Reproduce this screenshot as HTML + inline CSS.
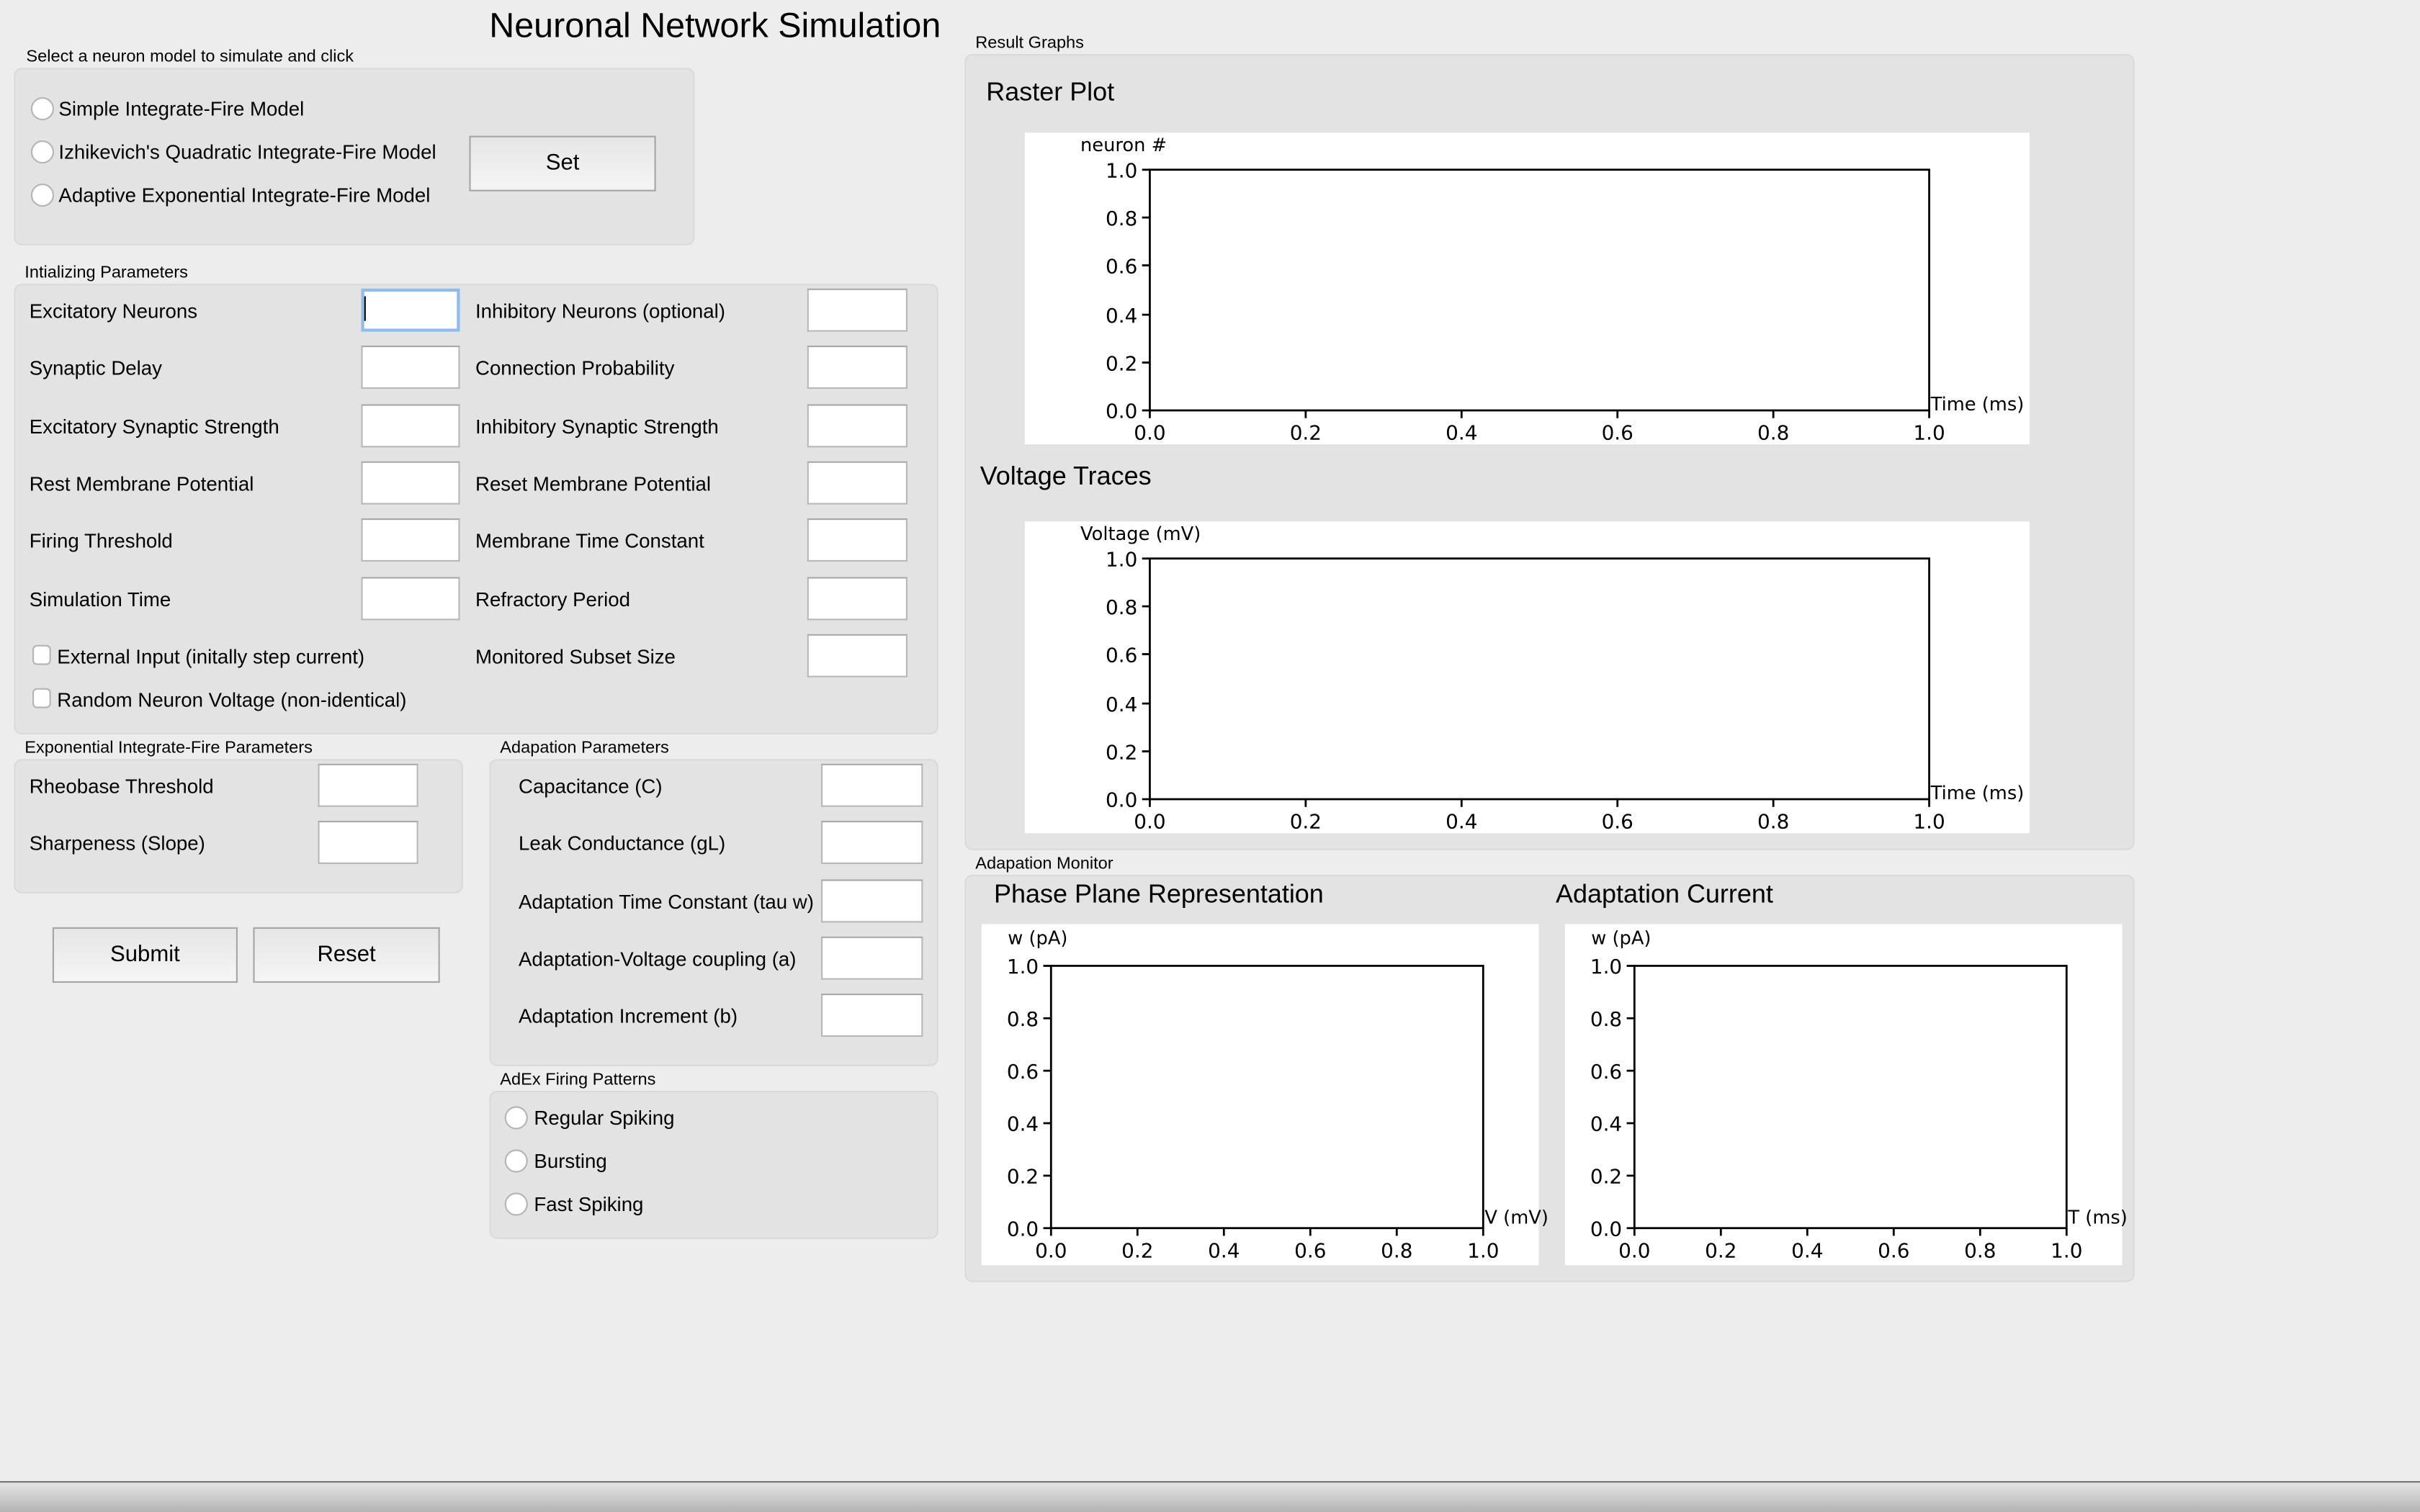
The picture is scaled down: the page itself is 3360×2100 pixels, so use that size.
<!DOCTYPE html>
<html><head><meta charset="utf-8">
<style>
html,body{margin:0;padding:0;background:#ededed;overflow:hidden}
#root{position:absolute;left:0;top:0;width:1568px;height:980px;transform:scale(2.142857);transform-origin:0 0;font-family:"Liberation Sans",sans-serif;color:#000;font-size:12.5px}
.a{position:absolute;white-space:nowrap}
.p{position:absolute;background:#e3e3e3;border:1px solid #dadada;border-radius:5px;box-sizing:border-box}
.cap{position:absolute;font-size:11px;white-space:nowrap}
.in{position:absolute;width:64px;height:28px;background:#fff;border:1px solid #b8b8b8;border-top-color:#a8a8a8;box-sizing:border-box}
.rb{position:absolute;width:15px;height:15px;border-radius:50%;background:#fff;border:1px solid #b5b5b5;box-sizing:border-box}
.cb{position:absolute;width:12px;height:13px;border-radius:3px;background:#fff;border:1px solid #b5b5b5;box-sizing:border-box}
.btn{position:absolute;background:linear-gradient(#e6e6e6,#f5f5f5);border:1px solid #a6a6a6;box-sizing:border-box;text-align:center;font-size:14.5px}
.lbl{position:absolute;font-size:12.9px;white-space:nowrap;line-height:14px}
.h{position:absolute;font-size:16.8px;white-space:nowrap}
</style></head><body><div id="root">
<div class="a" style="left:317px;top:4px;font-size:22.6px">Neuronal Network Simulation</div>

<div class="cap" style="left:17px;top:31px">Select a neuron model to simulate and click</div>
<div class="p" style="left:9px;top:44px;width:441px;height:115px"></div>
<div class="rb" style="left:20px;top:63px"></div><div class="lbl" style="left:38px;top:64px">Simple Integrate-Fire Model</div>
<div class="rb" style="left:20px;top:91px"></div><div class="lbl" style="left:38px;top:92px">Izhikevich's Quadratic Integrate-Fire Model</div>
<div class="rb" style="left:20px;top:119px"></div><div class="lbl" style="left:38px;top:120px">Adaptive Exponential Integrate-Fire Model</div>
<div class="btn" style="left:304px;top:88px;width:121px;height:36px;line-height:34px">Set</div>

<div class="cap" style="left:16px;top:171px">Intializing Parameters</div>
<div class="p" style="left:9px;top:184px;width:599px;height:292px"></div>
<div class="lbl" style="left:19px;top:195px">Excitatory Neurons</div><div class="in" style="left:234px;top:187px;border:2px solid #8fbbee"></div><div class="a" style="left:236px;top:192px;width:1px;height:16px;background:#000"></div>
<div class="lbl" style="left:19px;top:232px">Synaptic Delay</div><div class="in" style="left:234px;top:224px"></div>
<div class="lbl" style="left:19px;top:270px">Excitatory Synaptic Strength</div><div class="in" style="left:234px;top:262px"></div>
<div class="lbl" style="left:19px;top:307px">Rest Membrane Potential</div><div class="in" style="left:234px;top:299px"></div>
<div class="lbl" style="left:19px;top:344px">Firing Threshold</div><div class="in" style="left:234px;top:336px"></div>
<div class="lbl" style="left:19px;top:382px">Simulation Time</div><div class="in" style="left:234px;top:374px"></div>
<div class="cb" style="left:21px;top:418px"></div><div class="lbl" style="left:37px;top:419px">External Input (initally step current)</div>
<div class="cb" style="left:21px;top:446px"></div><div class="lbl" style="left:37px;top:447px">Random Neuron Voltage (non-identical)</div>
<div class="lbl" style="left:308px;top:195px">Inhibitory Neurons (optional)</div><div class="in" style="left:523px;top:187px;width:65px"></div>
<div class="lbl" style="left:308px;top:232px">Connection Probability</div><div class="in" style="left:523px;top:224px;width:65px"></div>
<div class="lbl" style="left:308px;top:270px">Inhibitory Synaptic Strength</div><div class="in" style="left:523px;top:262px;width:65px"></div>
<div class="lbl" style="left:308px;top:307px">Reset Membrane Potential</div><div class="in" style="left:523px;top:299px;width:65px"></div>
<div class="lbl" style="left:308px;top:344px">Membrane Time Constant</div><div class="in" style="left:523px;top:336px;width:65px"></div>
<div class="lbl" style="left:308px;top:382px">Refractory Period</div><div class="in" style="left:523px;top:374px;width:65px"></div>
<div class="lbl" style="left:308px;top:419px">Monitored Subset Size</div><div class="in" style="left:523px;top:411px;width:65px"></div>

<div class="cap" style="left:16px;top:479px">Exponential Integrate-Fire Parameters</div>
<div class="p" style="left:9px;top:492px;width:291px;height:87px"></div>
<div class="lbl" style="left:19px;top:503px">Rheobase Threshold</div><div class="in" style="left:206px;top:495px;width:65px"></div>
<div class="lbl" style="left:19px;top:540px">Sharpeness (Slope)</div><div class="in" style="left:206px;top:532px;width:65px"></div>

<div class="btn" style="left:34px;top:601px;width:120px;height:36px;line-height:34px">Submit</div>
<div class="btn" style="left:164px;top:601px;width:121px;height:36px;line-height:34px">Reset</div>

<div class="cap" style="left:324px;top:479px">Adapation Parameters</div>
<div class="p" style="left:317px;top:492px;width:291px;height:199px"></div>
<div class="lbl" style="left:336px;top:503px">Capacitance (C)</div><div class="in" style="left:532px;top:495px;width:66px"></div>
<div class="lbl" style="left:336px;top:540px">Leak Conductance (gL)</div><div class="in" style="left:532px;top:532px;width:66px"></div>
<div class="lbl" style="left:336px;top:578px">Adaptation Time Constant (tau w)</div><div class="in" style="left:532px;top:570px;width:66px"></div>
<div class="lbl" style="left:336px;top:615px">Adaptation-Voltage coupling (a)</div><div class="in" style="left:532px;top:607px;width:66px"></div>
<div class="lbl" style="left:336px;top:652px">Adaptation Increment (b)</div><div class="in" style="left:532px;top:644px;width:66px"></div>

<div class="cap" style="left:324px;top:694px">AdEx Firing Patterns</div>
<div class="p" style="left:317px;top:707px;width:291px;height:96px"></div>
<div class="rb" style="left:327px;top:717px"></div><div class="lbl" style="left:346px;top:718px">Regular Spiking</div>
<div class="rb" style="left:327px;top:745px"></div><div class="lbl" style="left:346px;top:746px">Bursting</div>
<div class="rb" style="left:327px;top:773px"></div><div class="lbl" style="left:346px;top:774px">Fast Spiking</div>

<div class="cap" style="left:632px;top:22px">Result Graphs</div>
<div class="p" style="left:625px;top:35px;width:758px;height:516px"></div>
<div class="h" style="left:639px;top:50px">Raster Plot</div>
<div class="h" style="left:635px;top:299px">Voltage Traces</div>
<div class="a" style="left:664px;top:86px;width:651px;height:202px;background:#fff"></div>
<div class="a" style="left:664px;top:338px;width:651px;height:202px;background:#fff"></div>

<div class="cap" style="left:632px;top:554px">Adapation Monitor</div>
<div class="p" style="left:625px;top:567px;width:758px;height:264px"></div>
<div class="h" style="left:644px;top:570px">Phase Plane Representation</div>
<div class="h" style="left:1008px;top:570px">Adaptation Current</div>
<div class="a" style="left:636px;top:599px;width:361px;height:221px;background:#fff"></div>
<div class="a" style="left:1014px;top:599px;width:361px;height:221px;background:#fff"></div>

<svg class="a" style="left:0;top:0" width="1568" height="980" viewBox="0 0 1568 980" font-family="DejaVu Sans, Liberation Sans, sans-serif" font-size="13">
<g fill="none" stroke="#000" stroke-width="1.3">
<rect x="745" y="110" width="505" height="156"/>
<path d="M745 266v5M846 266v5M947 266v5M1048 266v5M1149 266v5M1250 266v5M745 266h-5M745 235h-5M745 204h-5M745 172h-5M745 141h-5M745 110h-5"/>
<rect x="745" y="362" width="505" height="156"/>
<path d="M745 518v5M846 518v5M947 518v5M1048 518v5M1149 518v5M1250 518v5M745 518h-5M745 487h-5M745 456h-5M745 424h-5M745 393h-5M745 362h-5"/>
<rect x="681" y="626" width="280" height="170"/>
<path d="M681 796v5M737 796v5M793 796v5M849 796v5M905 796v5M961 796v5M681 796h-5M681 762h-5M681 728h-5M681 694h-5M681 660h-5M681 626h-5"/>
<rect x="1059" y="626" width="280" height="170"/>
<path d="M1059 796v5M1115 796v5M1171 796v5M1227 796v5M1283 796v5M1339 796v5M1059 796h-5M1059 762h-5M1059 728h-5M1059 694h-5M1059 660h-5M1059 626h-5"/>
</g>
<g text-anchor="end">
<text x="737" y="271">0.0</text><text x="737" y="240">0.2</text><text x="737" y="209">0.4</text><text x="737" y="177">0.6</text><text x="737" y="146">0.8</text><text x="737" y="115">1.0</text>
<text x="737" y="523">0.0</text><text x="737" y="492">0.2</text><text x="737" y="461">0.4</text><text x="737" y="429">0.6</text><text x="737" y="398">0.8</text><text x="737" y="367">1.0</text>
<text x="673" y="801">0.0</text><text x="673" y="767">0.2</text><text x="673" y="733">0.4</text><text x="673" y="699">0.6</text><text x="673" y="665">0.8</text><text x="673" y="631">1.0</text>
<text x="1051" y="801">0.0</text><text x="1051" y="767">0.2</text><text x="1051" y="733">0.4</text><text x="1051" y="699">0.6</text><text x="1051" y="665">0.8</text><text x="1051" y="631">1.0</text>
</g>
<g text-anchor="middle">
<text x="745" y="285">0.0</text><text x="846" y="285">0.2</text><text x="947" y="285">0.4</text><text x="1048" y="285">0.6</text><text x="1149" y="285">0.8</text><text x="1250" y="285">1.0</text>
<text x="745" y="537">0.0</text><text x="846" y="537">0.2</text><text x="947" y="537">0.4</text><text x="1048" y="537">0.6</text><text x="1149" y="537">0.8</text><text x="1250" y="537">1.0</text>
<text x="681" y="815">0.0</text><text x="737" y="815">0.2</text><text x="793" y="815">0.4</text><text x="849" y="815">0.6</text><text x="905" y="815">0.8</text><text x="961" y="815">1.0</text>
<text x="1059" y="815">0.0</text><text x="1115" y="815">0.2</text><text x="1171" y="815">0.4</text><text x="1227" y="815">0.6</text><text x="1283" y="815">0.8</text><text x="1339" y="815">1.0</text>
</g>
<g font-size="12">
<text x="700" y="98">neuron #</text>
<text x="1251" y="266">Time (ms)</text>
<text x="700" y="350">Voltage (mV)</text>
<text x="1251" y="518">Time (ms)</text>
<text x="653" y="612">w (pA)</text>
<text x="962" y="793">V (mV)</text>
<text x="1031" y="612">w (pA)</text>
<text x="1340" y="793">T (ms)</text>
</g>
</svg>

<div class="a" style="left:0;top:960px;width:1568px;height:1px;background:#707070"></div>
<div class="a" style="left:0;top:961px;width:1568px;height:19px;background:linear-gradient(#e4e4e4,#b4b4b4)"></div>
</div></body></html>
